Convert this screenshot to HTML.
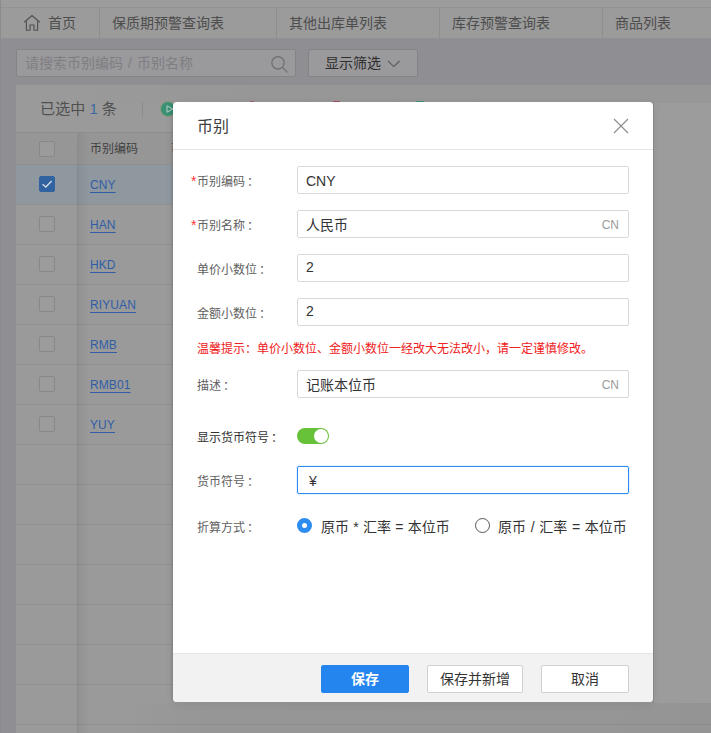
<!DOCTYPE html>
<html lang="zh-CN">
<head>
<meta charset="utf-8">
<title>币别</title>
<style>
*{box-sizing:border-box;margin:0;padding:0}
html,body{width:711px;height:733px;overflow:hidden}
body{position:relative;background:#8f8e93;font-family:"Liberation Sans","Noto Sans CJK SC",sans-serif;font-size:12px;color:#333}
.abs{position:absolute}
/* ---------- dimmed background page ---------- */
#topstrip{left:0;top:0;width:711px;height:7px;background:#9c9c9c}
#tabbar{left:0;top:7px;width:711px;height:31px;background:#9b9b9b;border-top:1px solid #939393;box-shadow:0 0.5px 0 #949397}
#leftedge{left:0;top:0;width:1px;height:733px;background:#8b8b8b}
.tab{position:absolute;top:0;height:30px;line-height:30px;font-size:14px;color:#4d4d4d;border-right:1px solid #8e8e8e;padding-left:12px;white-space:nowrap}
#search{left:16px;top:49px;width:280px;height:28px;border:1px solid #858488;background:#9a999c;word-spacing:1.2px;border-radius:2px;font-size:14px;line-height:26px;color:#7f7e82;padding-left:8px;white-space:nowrap}
#filter{left:308px;top:49px;width:110px;height:28px;border:1px solid #848387;background:#9a999c;border-radius:2px;font-size:14px;line-height:26px;color:#2e2e2e;padding-left:16px;white-space:nowrap}
#panel{left:16px;top:85px;width:695px;height:648px;background:#9a9a9a}
#rightlite{left:653px;top:103px;width:58px;height:600px;background:#9c9c9c;border-left:1px solid #8c8c8c}
#below{left:120px;top:703px;width:591px;height:30px;background:linear-gradient(90deg,rgba(0,0,0,0),rgba(0,0,0,.022) 80px,rgba(0,0,0,.028) 480px,rgba(0,0,0,.04))}
#leftsh{left:170px;top:104px;width:3px;height:597px;background:linear-gradient(90deg,rgba(0,0,0,0),rgba(0,0,0,.04) 34%,rgba(0,0,0,.11))}
#band{left:60px;top:85px;width:651px;height:18px;background:linear-gradient(90deg,rgba(0,0,0,0),rgba(0,0,0,.02) 200px)}
#toolbar{left:16px;top:85px;width:695px;height:47px}
#thead{left:16px;top:132px;width:695px;height:33px;background:#969696;border-top:1px solid #8e8e8e;border-bottom:1px solid #909090}
.row{position:absolute;left:16px;width:695px;height:40px;border-bottom:1px solid #919191}
.row.sel{background:#8f979f}
.cb{position:absolute;left:39px;width:16px;height:16px;border:1px solid #88878c;border-radius:2px;background:#9b9b9b}
.cb.on{background:#30639f;border-color:#30639f}
.lnk{position:absolute;left:90px;margin-top:1px;font-size:12px;line-height:16px;color:#305ea6;text-decoration:underline;text-underline-offset:3px;text-decoration-thickness:1px;letter-spacing:.1px}
#colshadow{left:77px;top:133px;width:13px;height:600px;background:linear-gradient(90deg,rgba(0,0,0,.06),rgba(0,0,0,.03) 40%,rgba(0,0,0,0))}
#colline2{left:77px;top:165px;width:1px;height:568px;background:rgba(0,0,0,.03)}
#colline{left:77px;top:142px;width:1px;height:15px;background:#8a8a8a}
/* ---------- dialog ---------- */
#dlg{left:173px;top:102px;width:480px;height:600px;background:#fff;border-radius:4px;box-shadow:0 2px 8px rgba(0,0,0,.08);overflow:hidden}
#dlg .hd{position:absolute;left:0;top:0;width:480px;height:48px;border-bottom:1px solid #e4e4e4}
#dlg .title{position:absolute;left:24px;top:13px;font-size:16px;line-height:24px;color:#3d3d3d}
#dlg .ft{position:absolute;left:0;top:551px;width:480px;height:49px;background:#f2f2f2;border-top:1px solid #e6e6e6}
.lab{position:absolute;left:24px;font-size:12px;line-height:20px;color:#606060;white-space:nowrap;margin-top:2px}
.lab.dk{color:#333}
.co{margin-left:2px}
.req{position:absolute;left:18px;font-size:14px;line-height:20px;color:#f33;margin-top:1px}
.inp{position:absolute;left:124px;width:332px;height:28px;border:1px solid #d9d9d9;border-radius:2px;background:#fff;font-size:14px;line-height:28px;color:#333;padding-left:8px;white-space:nowrap}
.inp.num{line-height:25px}
.inp.focus{border-color:#2d8cf0;box-shadow:0 0 0 1px rgba(45,140,240,.12)}
.suf{position:absolute;right:9px;top:1px;font-size:12px;color:#999;line-height:26px}
.warn{position:absolute;left:24px;top:237px;font-size:12px;line-height:20px;color:#f02020;white-space:nowrap}
.btn{position:absolute;top:563px;height:28px;border:1px solid #d0d0d0;border-radius:2px;background:#fff;font-size:14px;line-height:26px;color:#333;text-align:center;white-space:nowrap}
.btn.pri{background:#2585ee;border-color:#2585ee;color:#fff;font-weight:bold}
.rlab{position:absolute;top:415px;font-size:14px;line-height:20px;color:#333;white-space:nowrap}
</style>
</head>
<body>
<!-- background page (dimmed by modal mask) -->
<div class="abs" id="topstrip"></div>
<div class="abs" id="tabbar">
  <div class="tab" style="left:0;width:100px;padding-left:48px">首页</div>
  <svg class="abs" style="left:23px;top:6px" width="18" height="18" viewBox="0 0 18 18" fill="none" stroke="#505050" stroke-width="1.15"><path d="M1.2 8.2 L9 1.5 L16.8 8.2"/><path d="M3.4 7.2 V16.2 H7 V11 H11 V16.2 H14.6 V7.2"/></svg>
  <div class="tab" style="left:100px;width:177px">保质期预警查询表</div>
  <div class="tab" style="left:277px;width:163px">其他出库单列表</div>
  <div class="tab" style="left:440px;width:163px">库存预警查询表</div>
  <div class="tab" style="left:603px;width:163px;border-right:0">商品列表</div>
</div>
<div class="abs" id="search">请搜索币别编码 / 币别名称
  <svg class="abs" style="left:253px;top:5px" width="20" height="20" viewBox="0 0 20 20" fill="none" stroke="#706f73" stroke-width="1.3"><circle cx="8" cy="7.8" r="6.2"/><path d="M12.6 12.4 L17.4 17.4"/></svg>
</div>
<div class="abs" id="filter">显示筛选
  <svg class="abs" style="left:78px;top:10px" width="14" height="9" viewBox="0 0 14 9" fill="none" stroke="#5a5a5a" stroke-width="1.1"><path d="M1 1 L6.8 6.6 L12.6 1"/></svg>
</div>

<div class="abs" id="panel"></div>
<div class="abs" id="band"></div>
<div class="abs" id="toolbar">
  <div class="abs" style="left:24px;top:14px;font-size:15px;line-height:20px;color:#505050;white-space:nowrap;letter-spacing:.15px;word-spacing:-.4px">已选中 <span style="color:#3b6aa6">1</span> 条</div>
  <div class="abs" style="left:126px;top:17px;width:1px;height:15px;background:#8b8b8b"></div>
  <div class="abs" style="left:144px;top:16px;width:16px;height:16px;border-radius:50%;background:#3a9174;border:1px solid #8c9a7c"></div>
  <svg class="abs" style="left:150px;top:20px" width="8" height="8" viewBox="0 0 8 8" fill="none" stroke="#b9d0c7" stroke-width="1"><path d="M1 0.8 L6.8 4 L1 7.2 Z"/></svg>
  <div class="abs" style="left:210px;top:16px;width:1px;height:15px;background:#8e8e8e"></div>
  <div class="abs" style="left:294px;top:16px;width:1px;height:15px;background:#8e8e8e"></div>
  <div class="abs" style="left:378px;top:16px;width:1px;height:15px;background:#8e8e8e"></div>
  <div class="abs" style="left:462px;top:16px;width:1px;height:15px;background:#8e8e8e"></div>
  <div class="abs" style="left:233px;top:16px;width:6px;height:3px;border-radius:3px 3px 0 0;background:#a05058"></div>
  <div class="abs" style="left:317px;top:16px;width:7px;height:3px;background:#a05058"></div>
  <div class="abs" style="left:400px;top:16px;width:8px;height:3px;background:#3f9277"></div>
</div>
<div class="abs" id="thead">
  <div class="abs" style="left:74px;top:8px;font-size:12px;line-height:16px;color:#404040;white-space:nowrap">币别编码</div>
  <div class="abs" style="left:155px;top:8px;font-size:12px;line-height:16px;color:#404040;white-space:nowrap">币别名称</div>
</div>
<div class="row sel" style="top:165px"></div>
<div class="row" style="top:205px"></div>
<div class="row" style="top:245px"></div>
<div class="row" style="top:285px"></div>
<div class="row" style="top:325px"></div>
<div class="row" style="top:365px"></div>
<div class="row" style="top:405px"></div>
<div class="row" style="top:445px"></div>
<div class="row" style="top:485px"></div>
<div class="row" style="top:525px"></div>
<div class="row" style="top:565px"></div>
<div class="row" style="top:605px"></div>
<div class="row" style="top:645px"></div>
<div class="row" style="top:685px"></div>
<div class="abs" id="colshadow"></div>
<div class="abs" id="colline"></div>
<div class="abs" id="colline2"></div>

<div class="cb" style="top:141px"></div>
<div class="cb on" style="top:176px"><svg class="abs" style="left:1px;top:2px" width="12" height="10" viewBox="0 0 12 10" fill="none" stroke="#d3dae3" stroke-width="1.4"><path d="M1.6 5.2 L4.8 8 L10.6 2"/></svg></div>
<div class="cb" style="top:216px"></div>
<div class="cb" style="top:256px"></div>
<div class="cb" style="top:296px"></div>
<div class="cb" style="top:336px"></div>
<div class="cb" style="top:376px"></div>
<div class="cb" style="top:416px"></div>

<div class="lnk" style="top:176px">CNY</div>
<div class="lnk" style="top:216px">HAN</div>
<div class="lnk" style="top:256px">HKD</div>
<div class="lnk" style="top:296px">RIYUAN</div>
<div class="lnk" style="top:336px">RMB</div>
<div class="lnk" style="top:376px">RMB01</div>
<div class="lnk" style="top:416px">YUY</div>

<div class="abs" id="rightlite"></div>
<div class="abs" id="leftsh"></div>
<div class="abs" id="below"></div>

<!-- dialog -->
<div class="abs" id="dlg">
  <div class="hd">
    <div class="title">币别</div>
    <svg class="abs" style="left:440px;top:16px" width="16" height="16" viewBox="0 0 16 16" fill="none" stroke="#8a8a8a" stroke-width="1.1"><path d="M1 1 L15 15 M15 1 L1 15"/></svg>
  </div>

  <div class="req" style="top:68px">*</div>
  <div class="lab" style="top:68px">币别编码<span class="co">：</span></div>
  <div class="inp" style="top:64px">CNY</div>

  <div class="req" style="top:112px">*</div>
  <div class="lab" style="top:112px">币别名称<span class="co">：</span></div>
  <div class="inp" style="top:108px">人民币<span class="suf">CN</span></div>

  <div class="lab" style="top:156px">单价小数位<span class="co">：</span></div>
  <div class="inp num" style="top:152px">2</div>

  <div class="lab" style="top:200px">金额小数位<span class="co">：</span></div>
  <div class="inp num" style="top:196px">2</div>

  <div class="warn">温馨提示：单价小数位、金额小数位一经改大无法改小，请一定谨慎修改。</div>

  <div class="lab" style="top:272px">描述<span class="co">：</span></div>
  <div class="inp" style="top:268px">记账本位币<span class="suf">CN</span></div>

  <div class="lab dk" style="top:324px">显示货币符号<span class="co">：</span></div>
  <div class="abs" style="left:124px;top:326px;width:32px;height:16px;border-radius:8px;background:#67c23a"></div>
  <div class="abs" style="left:141px;top:327px;width:14px;height:14px;border-radius:50%;background:#fff"></div>

  <div class="lab" style="top:368px">货币符号<span class="co">：</span></div>
  <div class="inp focus" style="top:364px;padding-left:11px;line-height:28px">¥</div>

  <div class="lab" style="top:414px">折算方式<span class="co">：</span></div>
  <div class="abs" style="left:124px;top:416px;width:15px;height:15px;border-radius:50%;border:5px solid #2d8cf0;background:#fff"></div>
  <div class="rlab" style="left:148px;word-spacing:.4px">原币 * 汇率 = 本位币</div>
  <div class="abs" style="left:302px;top:416px;width:15px;height:15px;border-radius:50%;border:1px solid #555;background:#fff"></div>
  <div class="rlab" style="left:325px;word-spacing:.8px">原币 / 汇率 = 本位币</div>

  <div class="ft"></div>
  <div class="btn pri" style="left:148px;width:88px">保存</div>
  <div class="btn" style="left:254px;width:96px">保存并新增</div>
  <div class="btn" style="left:368px;width:88px">取消</div>
</div>
<div class="abs" id="leftedge"></div>
</body>
</html>
